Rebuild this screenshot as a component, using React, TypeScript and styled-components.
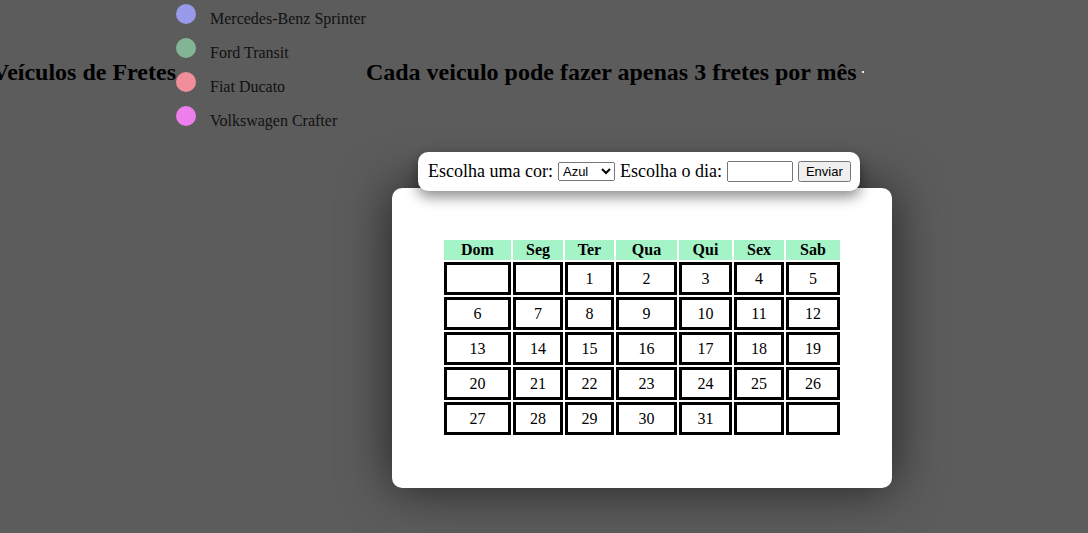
import React from "react";
import styled, { createGlobalStyle } from "styled-components";

const Global = createGlobalStyle`
  html, body { margin: 0; padding: 0; }
  body {
    background: #5c5c5c;
    font-family: "Liberation Serif", "Times New Roman", serif;
    color: #000;
    overflow: hidden;
  }
`;

const Page = styled.div`
  width: 1088px;
  height: 533px;
`;

const HeaderRow = styled.header`
  display: flex;
  align-items: flex-start;
  margin-left: -8px;
`;

const Title = styled.h2`
  margin: 58px 0 0;
  font-size: 24px;
  line-height: 28px;
  font-weight: bold;
  white-space: nowrap;
`;

const Dot = styled.span`
  width: 2px;
  height: 2px;
  margin: 71px 0 0 5px;
  background: #e8e8e8;
`;

const Legend = styled.ul`
  list-style: none;
  margin: 0;
  padding: 4px 0 0;
  display: flex;
  flex-direction: column;
  gap: 14px;
`;

const LegendItem = styled.li`
  display: flex;
  align-items: flex-start;
  gap: 14px;
  height: 20px;
  font-size: 16px;
  color: #111;
  white-space: nowrap;
`;

const Name = styled.span`
  margin-top: 6px;
  line-height: 18px;
`;

const Swatch = styled.span<{ $color: string }>`
  width: 20px;
  height: 20px;
  border-radius: 50%;
  background: ${(p) => p.$color};
  flex: none;
`;

const Board = styled.section`
  margin: 26px 0 0 392px;
`;

const FormBar = styled.form`
  position: relative;
  z-index: 1;
  display: flex;
  align-items: center;
  gap: 5px;
  width: fit-content;
  height: 39px;
  box-sizing: border-box;
  padding: 0 9px 0 10px;
  margin: 0 0 -3px 26px;
  background: #fff;
  border-radius: 10px;
  box-shadow: 0 6px 14px rgba(0, 0, 0, 0.45);
  font-size: 18px;
`;

const Label = styled.label`
  white-space: nowrap;
`;

const Select = styled.select`
  width: 57px;
  height: 19px;
  font-family: Arial, "Liberation Sans", sans-serif;
  font-size: 13px;
  padding: 0;
`;

const DayInput = styled.input`
  width: 66px;
  height: 21px;
  box-sizing: border-box;
  font-size: 13px;
`;

const Button = styled.button`
  height: 21px;
  box-sizing: border-box;
  font-family: Arial, "Liberation Sans", sans-serif;
  font-size: 13px;
  padding: 1px 6px;
`;

const Card = styled.div`
  width: 500px;
  height: 300px;
  box-sizing: border-box;
  padding: 50px;
  background: #fff;
  border-radius: 10px;
  box-shadow: 0 0 50px rgba(0, 0, 0, 0.65);
`;

const Calendar = styled.table`
  width: 100%;
  table-layout: fixed;
  border-collapse: separate;
  border-spacing: 2px;
  font-size: 16px;
`;

const HeadRow = styled.tr`
  height: 20px;
`;

const DayHead = styled.th<{ $w: number }>`
  width: ${(p) => p.$w}px;
  box-sizing: border-box;
  padding: 0;
  background: #a5f4c8;
  font-weight: bold;
  text-align: center;
`;

const WeekRow = styled.tr`
  height: 33px;
`;

const DayCell = styled.td`
  box-sizing: border-box;
  border: 3px solid #000;
  padding: 0;
  text-align: center;
`;

const vehicles = [
  { name: "Mercedes-Benz Sprinter", color: "#9a9aea" },
  { name: "Ford Transit", color: "#82b594" },
  { name: "Fiat Ducato", color: "#f08f9b" },
  { name: "Volkswagen Crafter", color: "#ec7fec" },
];

const days = [
  { label: "Dom", w: 67 },
  { label: "Seg", w: 50 },
  { label: "Ter", w: 49 },
  { label: "Qua", w: 61 },
  { label: "Qui", w: 53 },
  { label: "Sex", w: 50 },
  { label: "Sab", w: 54 },
];

const weeks: (number | null)[][] = [
  [null, null, 1, 2, 3, 4, 5],
  [6, 7, 8, 9, 10, 11, 12],
  [13, 14, 15, 16, 17, 18, 19],
  [20, 21, 22, 23, 24, 25, 26],
  [27, 28, 29, 30, 31, null, null],
];

export default function App() {
  return (
    <Page>
      <Global />
      <HeaderRow>
        <Title>Veículos de Fretes</Title>
        <Legend>
          {vehicles.map((v) => (
            <LegendItem key={v.name}>
              <Swatch $color={v.color} />
              <Name>{v.name}</Name>
            </LegendItem>
          ))}
        </Legend>
        <Title>Cada veiculo pode fazer apenas 3 fretes por mês</Title>
        <Dot />
      </HeaderRow>
      <Board>
        <FormBar onSubmit={(e) => e.preventDefault()}>
          <Label htmlFor="cor">Escolha uma cor:</Label>
          <Select id="cor" defaultValue="azul">
            <option value="azul">Azul</option>
            <option value="verde">Verde</option>
            <option value="rosa">Rosa</option>
            <option value="roxo">Roxo</option>
          </Select>
          <Label htmlFor="dia">Escolha o dia:</Label>
          <DayInput id="dia" type="text" />
          <Button type="submit">Enviar</Button>
        </FormBar>
        <Card>
          <Calendar>
            <thead>
              <HeadRow>
                {days.map((d) => (
                  <DayHead key={d.label} $w={d.w}>
                    {d.label}
                  </DayHead>
                ))}
              </HeadRow>
            </thead>
            <tbody>
              {weeks.map((week, i) => (
                <WeekRow key={i}>
                  {week.map((n, j) => (
                    <DayCell key={j}>{n ?? ""}</DayCell>
                  ))}
                </WeekRow>
              ))}
            </tbody>
          </Calendar>
        </Card>
      </Board>
    </Page>
  );
}
